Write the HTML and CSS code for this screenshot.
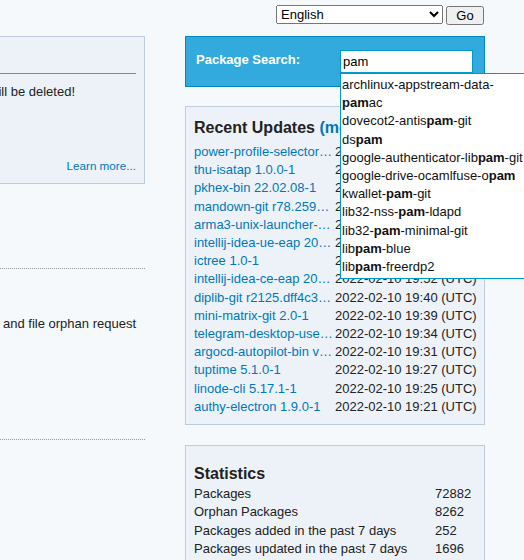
FILE: index.html
```html
<!DOCTYPE html>
<html lang="en">
<head>
<meta charset="utf-8">
<title>AUR (en) - Home</title>
<link rel="stylesheet" href="styles.css">
</head>
<body>
<div class="lang">
  <select class="lang-select"><option>English</option></select>
  <button type="button" class="lang-go">Go</button>
</div>
<div class="main">
  <div class="left">
    <div class="box intro">
      <hr class="rule">
      <p class="tail">will be deleted!</p>
      <p class="readmore"><a href="#">Learn more...</a></p>
    </div>
    <div class="news">
      <div class="dotted"></div>
      <p class="tail2">and file orphan request</p>
      <div class="dotted"></div>
    </div>
  </div>
  <div class="right">
    <div class="pkgsearch">
      <label class="search-label" for="pkgsearch-field">Package Search:</label>
      <div class="search-field">
        <input id="pkgsearch-field" class="search-input" type="text" value="pam">
        <ul class="typeahead">
          <li>archlinux-appstream-data-<b>pam</b>ac</li>
          <li>dovecot2-antis<b>pam</b>-git</li>
          <li>ds<b>pam</b></li>
          <li>google-authenticator-lib<b>pam</b>-git</li>
          <li>google-drive-ocamlfuse-o<b>pam</b></li>
          <li>kwallet-<b>pam</b>-git</li>
          <li>lib32-nss-<b>pam</b>-ldapd</li>
          <li>lib32-<b>pam</b>-minimal-git</li>
          <li>lib<b>pam</b>-blue</li>
          <li>lib<b>pam</b>-freerdp2</li>
        </ul>
      </div>
    </div>
    <div class="box updates">
      <h3 class="box-title">Recent Updates <span class="more">(<a href="#">more</a>)</span></h3>
      <table class="updates-table">
        <tr><td class="name"><a href="#">power-profile-selector 1.1.2-1</a></td><td class="date">2022-02-10 20:21 (UTC)</td></tr>
        <tr><td class="name"><a href="#">thu-isatap 1.0.0-1</a></td><td class="date">2022-02-10 20:16 (UTC)</td></tr>
        <tr><td class="name"><a href="#">pkhex-bin 22.02.08-1</a></td><td class="date">2022-02-10 20:12 (UTC)</td></tr>
        <tr><td class="name"><a href="#">mandown-git r78.2596e5f-1</a></td><td class="date">2022-02-10 20:08 (UTC)</td></tr>
        <tr><td class="name"><a href="#">arma3-unix-launcher-git 242.9b5d1c3-1</a></td><td class="date">2022-02-10 20:05 (UTC)</td></tr>
        <tr><td class="name"><a href="#">intellij-idea-ue-eap 2022.1.221.4165.146-1</a></td><td class="date">2022-02-10 19:59 (UTC)</td></tr>
        <tr><td class="name"><a href="#">ictree 1.0-1</a></td><td class="date">2022-02-10 19:55 (UTC)</td></tr>
        <tr><td class="name"><a href="#">intellij-idea-ce-eap 2022.1.221.4165.146-1</a></td><td class="date">2022-02-10 19:52 (UTC)</td></tr>
        <tr><td class="name"><a href="#">diplib-git r2125.dff4c3a5-1</a></td><td class="date">2022-02-10 19:40 (UTC)</td></tr>
        <tr><td class="name"><a href="#">mini-matrix-git 2.0-1</a></td><td class="date">2022-02-10 19:39 (UTC)</td></tr>
        <tr><td class="name"><a href="#">telegram-desktop-userfonts 3.5.2-1</a></td><td class="date">2022-02-10 19:34 (UTC)</td></tr>
        <tr><td class="name"><a href="#">argocd-autopilot-bin v0.3.0-1</a></td><td class="date">2022-02-10 19:31 (UTC)</td></tr>
        <tr><td class="name"><a href="#">tuptime 5.1.0-1</a></td><td class="date">2022-02-10 19:27 (UTC)</td></tr>
        <tr><td class="name"><a href="#">linode-cli 5.17.1-1</a></td><td class="date">2022-02-10 19:25 (UTC)</td></tr>
        <tr><td class="name"><a href="#">authy-electron 1.9.0-1</a></td><td class="date">2022-02-10 19:21 (UTC)</td></tr>
      </table>
    </div>
    <div class="box stats">
      <h3 class="box-title stats-title">Statistics</h3>
      <table class="stats-table">
        <tr><td class="stat-label">Packages</td><td>72882</td></tr>
        <tr><td class="stat-label">Orphan Packages</td><td>8262</td></tr>
        <tr><td class="stat-label">Packages added in the past 7 days</td><td>252</td></tr>
        <tr><td class="stat-label">Packages updated in the past 7 days</td><td>1696</td></tr>
      </table>
    </div>
  </div>
</div>
</body>
</html>
```

FILE: styles.css
```css
html {
  overflow: hidden;
}

body {
  margin: 0;
  background: #f6f9fc;
  color: #222;
  font: 13px/1.4 "Liberation Sans", Arial, sans-serif;
}

a {
  color: #07b;
  text-decoration: none;
}

/* language selector */
.lang {
  display: flex;
  justify-content: flex-end;
  align-items: flex-start;
  gap: 3px;
  height: 36px;
  box-sizing: border-box;
  padding: 5px 40px 0 0;
}

.lang-select {
  width: 167px;
  height: 19px;
  margin: 0;
  font: 13px "Liberation Sans", Arial, sans-serif;
  color: #000;
}

.lang-go {
  width: 38px;
  height: 19px;
  margin: 1px 0 0;
  padding: 0;
  font: 13px "Liberation Sans", Arial, sans-serif;
  color: #000;
}

/* columns */
.main {
  display: flex;
  align-items: flex-start;
}

.left {
  flex: none;
  width: 400px;
  margin-left: -255px;
}

.right {
  flex: none;
  width: 300px;
  margin-left: 40px;
}

.box {
  background: #ecf2f7;
  border: 1px solid #bcd;
}

/* intro box (left) */
.intro {
  padding: 10px 8px 10px 10px;
}

.rule {
  height: 0;
  margin: 26px 0 0;
  border: 0;
  border-top: 1px solid #888;
}

.tail {
  margin: 9px 0 0;
  padding-right: 61px;
  line-height: 18px;
  text-align: right;
  white-space: nowrap;
}

.readmore {
  margin: 57px 0 0;
  font-size: 11.7px;
  line-height: 15px;
  text-align: right;
}

/* news (left) */
.news {
  margin-top: 84px;
}

.dotted {
  border-top: 1px dotted #999;
}

.tail2 {
  margin: 46px 0 106px;
  padding-right: 9px;
  line-height: 18px;
  text-align: right;
  white-space: nowrap;
}

/* package search */
.pkgsearch {
  display: flex;
  justify-content: space-between;
  align-items: flex-start;
  padding: 13px 11px 13px 10px;
  background: #3ad;
  border: 1px solid #08b;
}

.search-label {
  margin-top: 2px;
  color: #fff;
  font-weight: bold;
  line-height: 15px;
}

.search-field {
  position: relative;
  width: 133px;
}

.search-input {
  display: block;
  width: 133px;
  height: 23px;
  box-sizing: border-box;
  margin: 0;
  padding: 0 2px;
  border: 1px solid #09c;
  background: #fff;
  color: #000;
  font: 13px "Liberation Sans", Arial, sans-serif;
  outline: none;
}

.typeahead {
  position: absolute;
  top: 100%;
  left: 0;
  z-index: 10;
  width: 186px;
  margin: 0;
  padding: 2px 1px 2px;
  list-style: none;
  background: #fff;
  border: 1px solid #09c;
  color: #111;
  line-height: 18.2px;
}

/* recent updates */
.updates {
  margin-top: 19px;
  padding: 10px 10px 8px 8px;
}

.box-title {
  margin: 0 0 5px;
  font-size: 16px;
  line-height: 21px;
  font-weight: bold;
}

.more {
  color: #07b;
}

.updates-table {
  width: 100%;
  table-layout: fixed;
  border-collapse: collapse;
  line-height: 18.2px;
}

.updates-table td {
  padding: 0;
  white-space: nowrap;
}

.updates-table .name {
  width: 141px;
  overflow: hidden;
  text-overflow: ellipsis;
  color: #07b;
}

/* statistics */
.stats {
  margin-top: 20px;
  padding: 10px 10px 10px 8px;
}

.stats-title {
  margin: 7px 0 1px;
}

.stats-table {
  border-collapse: collapse;
  line-height: 18.3px;
}

.stats-table td {
  padding: 0;
  white-space: nowrap;
}

.stats-table .stat-label {
  width: 241px;
}
```
